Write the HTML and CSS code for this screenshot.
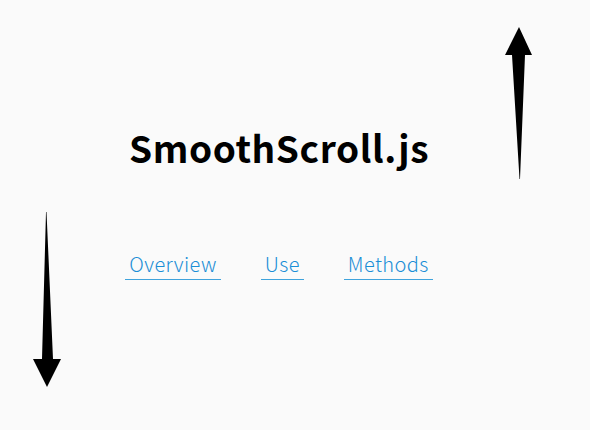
FILE: index.html
```html
<!DOCTYPE html>
<html>
<head>
<meta charset="utf-8">
<link rel="stylesheet" href="styles.css">
</head>
<body>
<main class="page">
  <h1 class="title">SmoothScroll.js</h1>
  <nav class="nav">
    <a class="nav-link" href="#overview">Overview</a>
    <a class="nav-link" href="#use">Use</a>
    <a class="nav-link" href="#methods">Methods</a>
  </nav>
</main>
<a class="arrow arrow-up" href="#top" aria-label="top">
  <svg width="28" height="152" viewBox="0 0 28 152"><path d="M14 0 L27 28 L20 28 L15 152 L14.5 152 L7 28 L0 28 Z" fill="#000"/></svg>
</a>
<a class="arrow arrow-down" href="#bottom" aria-label="bottom">
  <svg width="28" height="175" viewBox="0 0 28 175"><path d="M13 0 L13.5 0 L20 147 L28 147 L14 175 L0 147 L9 147 Z" fill="#000"/></svg>
</a>
</body>
</html>
```
FILE: styles.css
```css
html, body {
  margin: 0;
  padding: 0;
  background: #fafafa;
}
body {
  font-family: "Noto Sans CJK JP", "Noto Sans", sans-serif;
  color: #000;
  height: 430px;
  position: relative;
  overflow: hidden;
}
.page {
  display: flex;
  flex-direction: column;
  align-items: center;
  padding: 119px 32px 0 0;
}
.title {
  margin: 0;
  font-size: 37px;
  font-weight: 700;
  line-height: 56px;
  letter-spacing: 0.6px;
}
.nav {
  display: flex;
  gap: 40px;
  margin-top: 77px;
}
.nav-link {
  color: #1a8ed6;
  text-decoration: none;
  font-size: 20px;
  font-weight: 300;
  line-height: 24px;
  letter-spacing: 0.4px;
  padding: 0 4px 3px;
  border-bottom: 1px solid #3fa3dc;
}
.arrow {
  position: absolute;
  display: block;
  line-height: 0;
}
.arrow-up {
  left: 505px;
  top: 27px;
}
.arrow-down {
  left: 33px;
  top: 212px;
}
```
